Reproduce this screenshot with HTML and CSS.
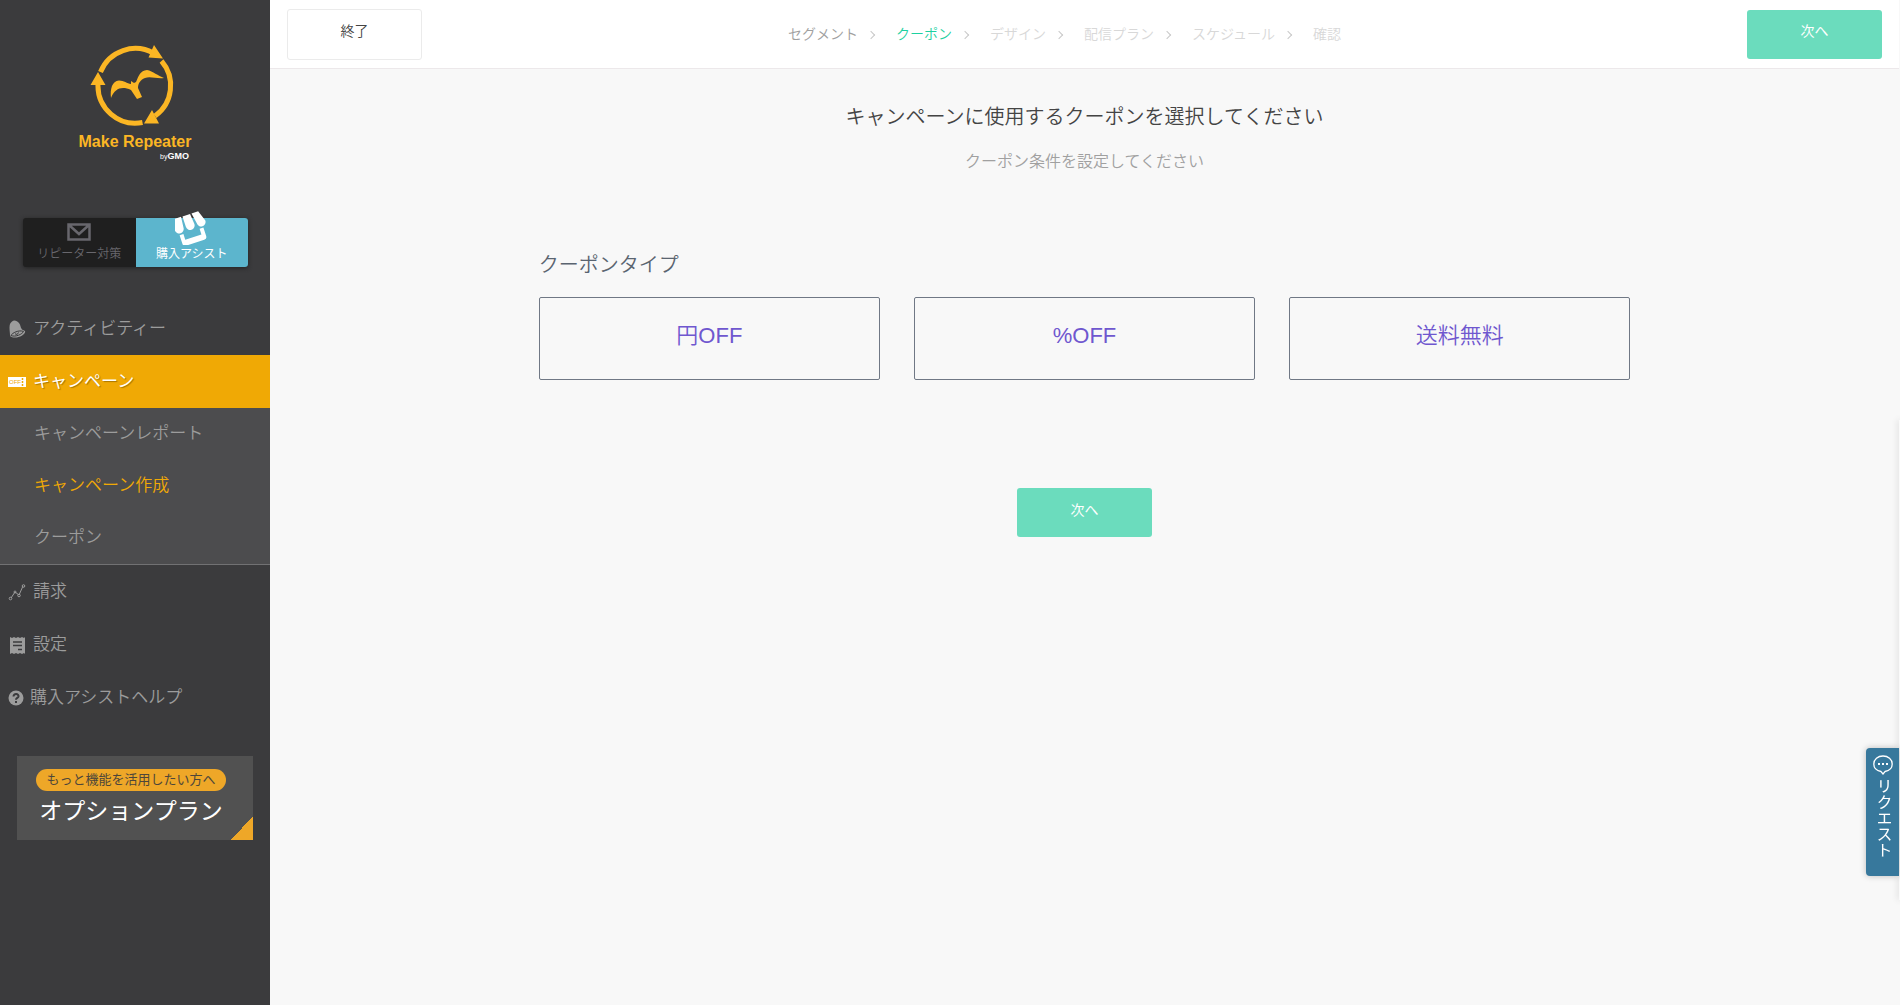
FILE: index.html
```html
<!DOCTYPE html>
<html lang="ja">
<head>
<meta charset="utf-8">
<meta name="viewport" content="width=device-width, initial-scale=1">
<title>キャンペーン作成 - Make Repeater</title>
<link rel="stylesheet" href="styles.css">
</head>
<body>
<div class="app">
  <aside class="sidebar">
    <a class="logo" href="#" aria-label="Make Repeater by GMO">
      <svg class="logo-mark" viewBox="0 0 90 84" aria-hidden="true">
        <g fill="none" stroke="#fbb624" stroke-width="5">
          <path d="M10.500 28A37.500 37.500 0 0 1 64 9.500"/>
          <path d="M71.500 17A37.500 37.500 0 0 1 65 72"/>
          <path d="M52.500 78.500A37.500 37.500 0 0 1 8 40"/>
        </g>
        <g fill="#fbb624">
          <path d="M64 1 73 14.500 58.500 13.500zM8 28 15.500 41H0.500zM62 66 69 79.500H54z"/>
          <path d="M21 54c-1-9 1-17 8-17.500 5 0 8 3 12 3.500v-3l3 2 2-1c3-7 4-11 11-12 6 1 11 6 17 8-7 1-14-2-19 0-5 2-7 6-7 10l4 9-5 2-6-9c-9-4-16-2-20 8z"/>
        </g>
      </svg>
      <span class="logo-name">Make Repeater</span>
      <span class="logo-by">by<b>GMO</b></span>
    </a>

    <div class="switch">
      <button class="switch-item" type="button">
        <svg class="icon-mail" viewBox="0 0 24 18" aria-hidden="true"><path d="M1.500 1.500h21v15h-21zM2 2l10 9L22 2" fill="none" stroke="currentColor" stroke-width="2.500"/></svg>
        <span>リピーター対策</span>
      </button>
      <button class="switch-item switch-item-on" type="button">
        <svg class="icon-store" viewBox="0 0 34 34" aria-hidden="true">
          <g fill="#fff" transform="rotate(-18 17 17)">
            <path d="M3 3h7l-1 11a4.500 4.500 0 0 1-9 0zM11.500 3h8l1 11a4.500 4.500 0 0 1-9 0zM21 3h7l4 11a4.500 4.500 0 0 1-9 0z"/>
            <path d="M3 20h4v6h17v-6h4v9a3 3 0 0 1-3 3H6a3 3 0 0 1-3-3z"/>
          </g>
        </svg>
        <span>購入アシスト</span>
      </button>
    </div>

    <nav class="nav">
      <a class="nav-item" href="#">
        <svg class="nav-icon" viewBox="0 0 18 18" aria-hidden="true"><path d="M2 15.500C2 11 0 4 4 1.500 6-.5 9 .5 11 3c2 2.500 1 4 3 6.500l3 1.500c1 3-5 6.500-10 6.500-3 0-4.500-.5-5-2z" fill="currentColor"/><path d="M3 15.500c1-2.500 8-6 12.500-4-1 2.500-8 6-12.500 4zM7 13.500c1 1.500 3 1 3.500-1" fill="none" stroke="#3b3b3d"/></svg>
        <span>アクティビティー</span>
      </a>
      <a class="nav-item nav-item-on" href="#">
        <svg class="nav-icon" viewBox="0 0 18 18" aria-hidden="true"><path d="M0 4h18v10H0z" fill="#fff"/><path d="M14.500 5v9" stroke="#f0a905" stroke-width="1.500" stroke-dasharray="2 1"/><text class="ticket-text" x="1" y="11">OFF</text></svg>
        <span>キャンペーン</span>
      </a>
      <div class="subnav">
        <a class="subnav-item" href="#">キャンペーンレポート</a>
        <a class="subnav-item subnav-item-on" href="#">キャンペーン作成</a>
        <a class="subnav-item" href="#">クーポン</a>
      </div>
      <a class="nav-item" href="#">
        <svg class="nav-icon" viewBox="0 0 18 18" aria-hidden="true"><g fill="none" stroke="currentColor"><path d="M3 15l4-6 4 3 4-9"/><circle cx="2.500" cy="15.500" r="1.300"/><circle cx="7" cy="9" r="1"/><circle cx="11" cy="12.500" r="1.300"/><circle cx="15.500" cy="3" r="1.300"/></g></svg>
        <span>請求</span>
      </a>
      <a class="nav-item" href="#">
        <svg class="nav-icon" viewBox="0 0 18 18" aria-hidden="true"><path d="M2 1l2 1 2-1 2 1 2-1 2 1 2-1 2 1 1-1v17l-1-1-2 1-2-1-2 1-2-1-2 1-2-1-2 1z" fill="currentColor"/><path d="M5 6h9M5 9.500h9M10 13.500h4" stroke="#3b3b3d" stroke-width="1.500"/></svg>
        <span>設定</span>
      </a>
      <a class="nav-item nav-item-help" href="#">
        <svg class="nav-icon" viewBox="0 0 18 18" aria-hidden="true"><circle cx="8" cy="9" r="7.500" fill="currentColor"/><path d="M5.500 7.500c0-3.500 5.500-3 5 0-.3 1.500-2.500 1.500-2.500 3.300M8 12v2" fill="none" stroke="#3b3b3d" stroke-width="2"/></svg>
        <span>購入アシストヘルプ</span>
      </a>
    </nav>

    <a class="banner" href="#">
      <span class="banner-pill">もっと機能を活用したい方へ</span>
      <span class="banner-title">オプションプラン</span>
    </a>
  </aside>

  <div class="page">
    <header class="topbar">
      <button class="btn btn-plain" type="button">終了</button>
      <ol class="steps">
        <li class="step step-done">セグメント</li>
        <li class="step step-on" aria-current="step">クーポン</li>
        <li class="step">デザイン</li>
        <li class="step">配信プラン</li>
        <li class="step">スケジュール</li>
        <li class="step">確認</li>
      </ol>
      <button class="btn btn-next" type="button">次へ</button>
    </header>

    <main class="content">
      <h1 class="title">キャンペーンに使用するクーポンを選択してください</h1>
      <p class="lead">クーポン条件を設定してください</p>
      <section class="types">
        <h2 class="types-title">クーポンタイプ</h2>
        <div class="types-grid">
          <button class="type" type="button">円OFF</button>
          <button class="type" type="button">%OFF</button>
          <button class="type" type="button">送料無料</button>
        </div>
      </section>
      <button class="btn btn-next" type="button">次へ</button>
    </main>
  </div>
</div>

<div class="drawer-edge"></div>
<button class="request" type="button">
  <svg class="icon-chat" viewBox="0 0 20 20" aria-hidden="true"><path d="M8 16.500C3 15.500.8 12.500.8 9c0-4.500 4-8 9.200-8s9.200 3.500 9.200 8c0 3.500-2.200 6.500-7.200 7.500l-2 2.500z" fill="none" stroke="#fff" stroke-width="1.300"/><path d="M5 8h2v2H5zM9 8h2v2H9zM13 8h2v2h-2z" fill="#fff"/></svg>
  <span>リクエスト</span>
</button>
</body>
</html>
```

FILE: styles.css
```css
*,
*::after {
  box-sizing: border-box;
}

body {
  margin: 0;
  background: #f8f8f8;
  color: #444;
  font-family: "Liberation Sans", "Noto Sans CJK JP", sans-serif;
  font-weight: 350;
}

a {
  color: inherit;
  text-decoration: none;
}

button {
  padding: 0;
  border: 0;
  font: inherit;
  cursor: pointer;
}

.app {
  display: flex;
  min-height: 100vh;
}

/* Sidebar */

.sidebar {
  flex: none;
  width: 270px;
  background: #3b3b3d;
  color: #9c9c9c;
}

.logo {
  display: flex;
  flex-direction: column;
  align-items: center;
  padding-top: 44px;
  color: #fbb624;
}

.logo-mark {
  width: 90px;
  height: 84px;
}

.logo-name {
  margin-top: 4px;
  font: bold 16px/20px "Liberation Sans Narrow", "Liberation Sans", sans-serif;
}

.logo-by {
  width: 108px;
  color: #fff;
  font-size: 7px;
  line-height: 8px;
  text-align: right;
}

.logo-by b {
  font-size: 9px;
}

.switch {
  display: flex;
  height: 49px;
  margin: 57px 22px 35px 23px;
  border-radius: 3px;
  background: #1f1f1f;
  box-shadow: 0 1px 4px #222;
}

.switch-item {
  display: flex;
  flex: 1;
  flex-direction: column;
  align-items: center;
  justify-content: flex-end;
  gap: 4px;
  padding-bottom: 4px;
  background: none;
  color: #68676d;
  font-size: 12px;
  line-height: 18px;
}

.switch-item-on {
  gap: 0;
  border-radius: 0 3px 3px 0;
  background: #5cb5cd;
  color: #fff;
  font-weight: 400;
}

.icon-mail {
  width: 24px;
  height: 18px;
}

.icon-store {
  flex: none;
  width: 34px;
  height: 34px;
}

.nav-item {
  display: flex;
  align-items: center;
  gap: 7px;
  height: 53px;
  padding: 0 8px 4px;
  font-size: 17px;
}

.nav-item-on {
  background: #f0a905;
  color: #fff;
  font-weight: 400;
  text-shadow: 1px 1px 1px #a87500;
}

.nav-item-help {
  gap: 4px;
}

.nav-icon {
  flex: none;
  width: 18px;
  height: 18px;
  margin-top: 4px;
}

.ticket-text {
  fill: #f0a905;
  font-size: 6px;
  text-shadow: none;
}

.subnav {
  border-bottom: 1px solid #717173;
  background: #4c4c4e;
}

.subnav-item {
  display: block;
  padding-left: 34px;
  font-size: 17px;
  line-height: 52px;
}

.subnav-item-on {
  color: #f0a905;
}

.banner {
  display: flex;
  flex-direction: column;
  align-items: center;
  height: 84px;
  margin: 32px 17px 0;
  padding: 13px 8px 0 0;
  background: linear-gradient(to bottom right, transparent 50%, #eea728 50%) right bottom / 22px 24px no-repeat #515151;
}

.banner-pill {
  width: 190px;
  border-radius: 11px;
  background: #eea728;
  color: #4d463a;
  font-size: 13px;
  font-weight: 400;
  line-height: 22px;
  text-align: center;
}

.banner-title {
  color: #fff;
  font-size: 23px;
  font-weight: 400;
  line-height: 40px;
}

/* Page */

.page {
  flex: 1;
  min-width: 0;
  padding-right: 1px;
}

.topbar {
  display: flex;
  align-items: center;
  justify-content: space-between;
  height: 69px;
  padding: 0 17px;
  border-bottom: 1px solid #ece8ea;
  background: #fff;
}

.btn {
  width: 135px;
  height: 49px;
  padding-bottom: 8px;
  border-radius: 3px;
  font-size: 14px;
}

.btn-plain {
  height: 51px;
  border: 1px solid #ebebeb;
  background: #fff;
  color: #444;
}

.btn-next {
  background: #6bdcbd;
  color: #fff;
  font-weight: 400;
}

.steps {
  display: flex;
  margin: 0;
  padding: 0 40px 2px 0;
  color: #d8d8d8;
  font-size: 14px;
  list-style: none;
}

.step {
  display: flex;
  align-items: center;
}

.step:not(:last-child)::after {
  width: 6px;
  height: 6px;
  margin: 4px 22px 0 10px;
  border: solid #c8c8c8;
  border-width: 1px 1px 0 0;
  content: "";
  transform: rotate(45deg);
}

.step-done {
  color: #a0a0a0;
}

.step-on {
  color: #1dd1a1;
}

.content {
  display: flex;
  flex-direction: column;
  align-items: center;
  padding: 33px 0;
}

.title {
  margin: 0;
  font-size: 20px;
  font-weight: 350;
  line-height: 30px;
}

.lead {
  margin: 18px 0 0;
  color: #a0a0a0;
  font-size: 16px;
  line-height: 24px;
}

.types {
  width: 67%;
  margin: 76px 0 108px;
}

.types-title {
  margin: 0 0 17px;
  color: #5a6470;
  font-size: 20px;
  font-weight: 350;
  line-height: 30px;
}

.types-grid {
  display: grid;
  grid-template-columns: repeat(3, 1fr);
  gap: 34px;
}

.type {
  height: 83px;
  padding-bottom: 6px;
  border: 1px solid #707885;
  border-radius: 2px;
  background: transparent;
  color: #6f57cf;
  font-size: 22px;
  line-height: 30px;
}

/* Request tab, fixed to the right edge of the window */

.drawer-edge {
  position: fixed;
  top: 420px;
  right: 0;
  bottom: 105px;
  width: 1px;
  background: #fafafa;
  box-shadow: 0 0 6px #999;
}

.request {
  position: fixed;
  right: 1px;
  bottom: 129px;
  display: flex;
  flex-direction: column;
  align-items: center;
  gap: 3px;
  width: 33px;
  height: 128px;
  padding-top: 7px;
  border-radius: 4px 0 0 4px;
  background: #37789c;
  box-shadow: 0 0 6px #bbb;
  color: #fff;
  font-size: 16px;
  font-weight: 400;
}

.request span {
  writing-mode: vertical-rl;
}

.icon-chat {
  width: 20px;
  height: 20px;
}
```
